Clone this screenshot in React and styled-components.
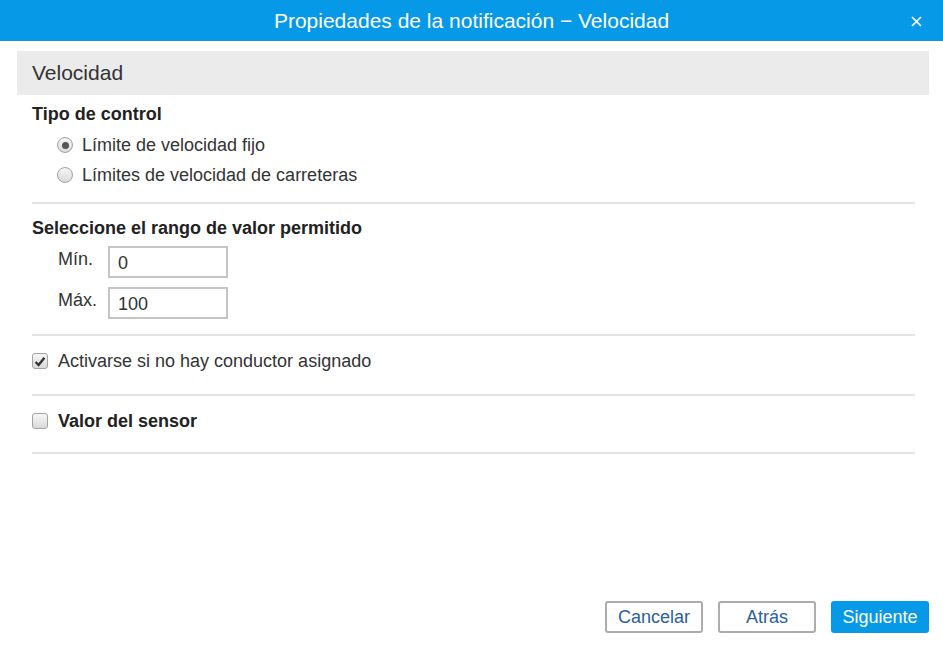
import React from 'react'
import styled, { createGlobalStyle } from 'styled-components'

const GlobalStyle = createGlobalStyle`
  html, body {
    margin: 0;
    padding: 0;
    background: #fff;
  }
  body {
    font-family: "Liberation Sans", Arial, sans-serif;
    color: #333;
  }
`

const Dialog = styled.div`
  width: 943px;
  height: 657px;
  display: flex;
  flex-direction: column;
  background: #fff;
`

const Header = styled.div`
  position: relative;
  height: 41px;
  background: #0599e8;
  color: #fff;
  font-size: 21px;
  display: flex;
  align-items: center;
  justify-content: center;
`

const Close = styled.button`
  position: absolute;
  right: 21px;
  top: 15px;
  width: 12px;
  height: 12px;
  padding: 0;
  border: 0;
  background: transparent;
  display: flex;
  align-items: center;
  justify-content: center;
`

const Content = styled.div`
  flex: 1;
  padding: 10px 14px 0 17px;
`

const SectionTitle = styled.div`
  height: 44px;
  background: #ebebeb;
  padding-left: 15px;
  display: flex;
  align-items: center;
  font-size: 21px;
  color: #333;
`

const Body = styled.div`
  padding: 0 14px 0 15px;
`

const Group = styled.div`
  padding: ${p => p.top || 0}px 0 ${p => p.bottom || 0}px;
  border-bottom: 2px solid #e2e2e2;
`

const GroupTitle = styled.div`
  font-size: 18px;
  font-weight: bold;
  color: #222;
  line-height: 22px;
`

const OptionRow = styled.label`
  display: flex;
  align-items: center;
  height: 30px;
  margin-left: ${p => p.indent || 0}px;
  font-size: 18px;
  font-weight: ${p => (p.bold ? 'bold' : 'normal')};
  color: ${p => (p.bold ? '#222' : '#333')};
`

const Radio = styled.span`
  width: 14px;
  height: 14px;
  border-radius: 50%;
  border: 1px solid #a3a3a3;
  background: linear-gradient(#f5f5f5, #d9d9d9);
  margin-right: 9px;
  display: flex;
  align-items: center;
  justify-content: center;
  box-sizing: content-box;
  &::after {
    content: '';
    width: 7px;
    height: 7px;
    border-radius: 50%;
    background: ${p => (p.checked ? '#555' : 'transparent')};
  }
`

const Box = styled.span`
  width: 14px;
  height: 14px;
  border-radius: 3px;
  border: 1px solid #a3a3a3;
  background: linear-gradient(#f6f6f6, #dadada);
  margin-right: 10px;
  display: flex;
  align-items: center;
  justify-content: center;
  box-sizing: content-box;
`

const Range = styled.div`
  margin: 7px 0 0 26px;
  display: grid;
  grid-template-columns: 50px 120px;
  row-gap: 9px;
`

const FieldLabel = styled.div`
  font-size: 18px;
  line-height: 22px;
  color: #333;
  padding-top: 2px;
`

const Input = styled.input`
  box-sizing: border-box;
  width: 120px;
  height: 32px;
  border: 2px solid #c4c4c4;
  padding: 2px 8px 0;
  font-family: inherit;
  font-size: 18px;
  color: #333;
  outline: none;
`

const Footer = styled.div`
  display: flex;
  justify-content: flex-end;
  gap: 15px;
  padding: 0 14px 24px 0;
`

const Button = styled.button`
  box-sizing: border-box;
  width: 98px;
  height: 32px;
  border-radius: 3px;
  font-family: inherit;
  font-size: 18px;
  border: 2px solid ${p => (p.primary ? '#0599e8' : '#acacac')};
  background: ${p => (p.primary ? '#0599e8' : '#fff')};
  color: ${p => (p.primary ? '#fff' : '#2b5e9e')};
  padding: 0;
`

const Check = () => (
  <svg width="12" height="11" viewBox="0 0 12 11">
    <path d="M1.6 6 L4.6 9 L10.4 1.8" fill="none" stroke="#333" strokeWidth="2.4" />
  </svg>
)

export default function App() {
  return (
    <Dialog>
      <GlobalStyle />
      <Header>
        Propiedades de la notificación − Velocidad
        <Close aria-label="Cerrar">
          <svg width="11" height="11" viewBox="0 0 11 11">
            <path d="M1 1 L10 10 M10 1 L1 10" stroke="#fff" strokeWidth="1.7" />
          </svg>
        </Close>
      </Header>
      <Content>
        <SectionTitle>Velocidad</SectionTitle>
        <Body>
          <Group top={8} bottom={12}>
            <GroupTitle>Tipo de control</GroupTitle>
            <OptionRow indent={25} style={{ marginTop: 5 }}>
              <Radio checked />
              Límite de velocidad fijo
            </OptionRow>
            <OptionRow indent={25}>
              <Radio />
              Límites de velocidad de carreteras
            </OptionRow>
          </Group>
          <Group top={13} bottom={15}>
            <GroupTitle>Seleccione el rango de valor permitido</GroupTitle>
            <Range>
              <FieldLabel>Mín.</FieldLabel>
              <Input defaultValue="0" />
              <FieldLabel>Máx.</FieldLabel>
              <Input defaultValue="100" />
            </Range>
          </Group>
          <Group top={10} bottom={18}>
            <OptionRow>
              <Box><Check /></Box>
              Activarse si no hay conductor asignado
            </OptionRow>
          </Group>
          <Group top={10} bottom={16}>
            <OptionRow bold>
              <Box />
              Valor del sensor
            </OptionRow>
          </Group>
        </Body>
      </Content>
      <Footer>
        <Button>Cancelar</Button>
        <Button>Atrás</Button>
        <Button primary>Siguiente</Button>
      </Footer>
    </Dialog>
  )
}
